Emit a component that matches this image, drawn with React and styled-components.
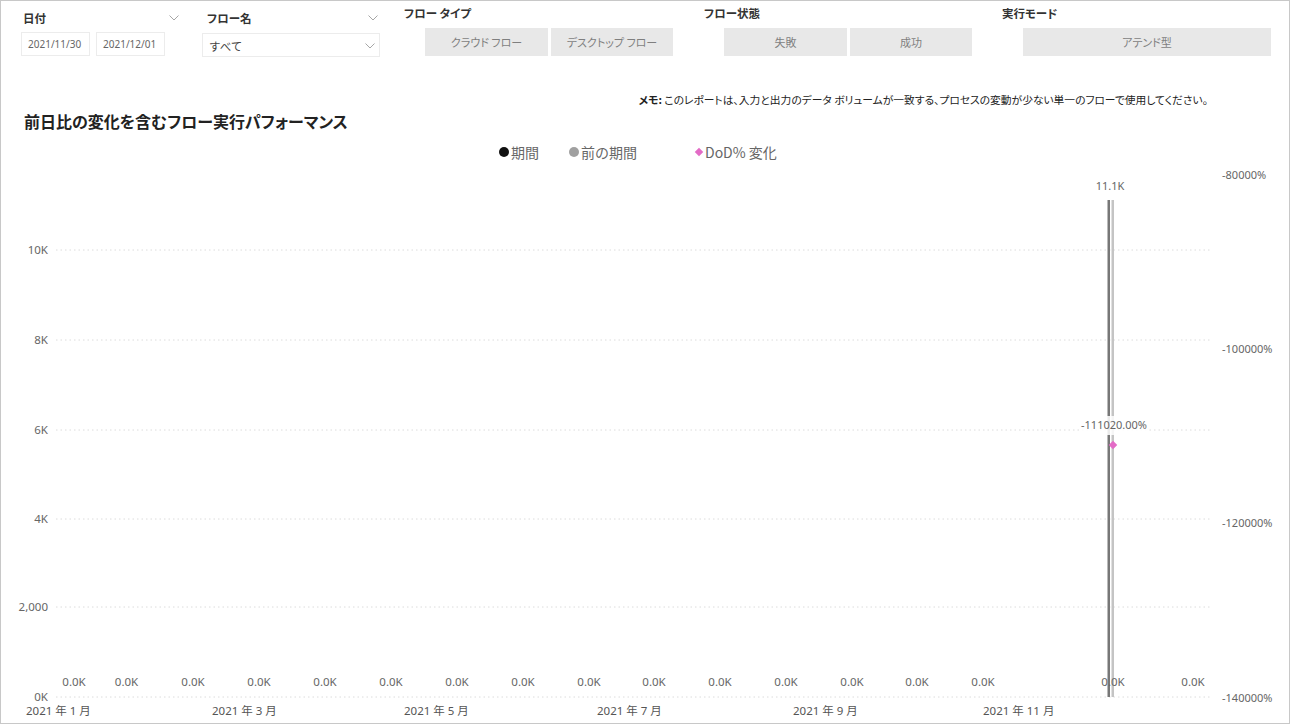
import React from "react";
import styled, { createGlobalStyle } from "styled-components";

const GlobalStyle = createGlobalStyle`
  body {
    margin: 0;
    background: #fff;
    font-family: "Noto Sans", "Noto Sans CJK JP", sans-serif;
  }
`;

const Frame = styled.div`
  width: 1290px;
  height: 724px;
  box-sizing: border-box;
  border: 1px solid #c8c8c8;
  display: flex;
  flex-direction: column;
  overflow: hidden;
  background: #fff;
`;

const FilterBar = styled.div`
  display: flex;
  align-items: flex-start;
  height: 70px;
  padding-left: 20px;
`;

const Group = styled.div`
  width: ${(p) => p.w}px;
  margin-left: ${(p) => p.ml || 0}px;
  padding-top: ${(p) => p.pt}px;
  flex-shrink: 0;
`;

const Header = styled.div`
  display: flex;
  justify-content: space-between;
  align-items: center;
  height: 14px;
  padding-right: 2px;
`;

const Label = styled.span`
  font-family: "Noto Sans CJK JP", sans-serif;
  font-feature-settings: "palt";
  font-size: 11.5px;
  font-weight: 700;
  color: #333;
  line-height: 14px;
  padding-left: ${(p) => p.pl || 0}px;
`;

const Chevron = () => (
  <svg width="10" height="6" viewBox="0 0 10 6">
    <polyline points="0.5,0.5 5,5 9.5,0.5" fill="none" stroke="#a6a6a6" strokeWidth="1" />
  </svg>
);

const Inputs = styled.div`
  display: flex;
  gap: 6px;
  margin-top: 7px;
`;

const DateBox = styled.div`
  width: 69px;
  height: 24px;
  box-sizing: border-box;
  border: 1px solid #ececec;
  font-size: 10px;
  color: #666;
  display: flex;
  align-items: center;
  padding-left: 6px;
`;

const Dropdown = styled.div`
  margin-top: 8px;
  width: 178px;
  height: 24px;
  box-sizing: border-box;
  border: 1px solid #ececec;
  display: flex;
  align-items: center;
  justify-content: space-between;
  padding: 1px 4px 0 6px;
  font-family: "Noto Sans CJK JP", sans-serif;
  font-size: 11.5px;
  color: #444;
`;

const Buttons = styled.div`
  display: flex;
  gap: 3px;
  margin-top: 8px;
  margin-left: ${(p) => p.ml}px;
`;

const SlicerButton = styled.div`
  width: ${(p) => p.w}px;
  height: 28px;
  background: #e8e8e8;
  display: flex;
  align-items: center;
  justify-content: center;
  font-family: "Noto Sans CJK JP", sans-serif;
  font-feature-settings: "palt";
  font-size: 11px;
  color: #7f7f7f;
`;

const Note = styled.div`
  margin-top: 22px;
  padding-right: 81px;
  text-align: right;
  font-family: "Noto Sans CJK JP", sans-serif;
  font-feature-settings: "palt";
  font-size: 10.75px;
  line-height: 14px;
  color: #222;
  b {
    font-weight: 700;
  }
`;

const Title = styled.div`
  margin-top: 3px;
  padding-left: 23px;
  font-family: "Noto Sans CJK JP", sans-serif;
  font-feature-settings: "palt";
  font-size: 16px;
  font-weight: 700;
  line-height: 22px;
  color: #222;
`;

const Legend = styled.div`
  display: flex;
  align-items: center;
  margin-top: 11px;
  height: 18px;
  padding-left: 498px;
  font-family: "Noto Sans CJK JP", sans-serif;
  font-size: 14px;
  color: #666;
`;

const LegendItem = styled.div`
  display: flex;
  align-items: center;
  margin-left: ${(p) => p.ml}px;
  gap: 2px;
`;

const Dot = styled.span`
  width: 10px;
  height: 10px;
  border-radius: 50%;
  background: ${(p) => p.color};
`;

const Diamond = styled.span`
  width: 6px;
  height: 6px;
  margin: 0 1px;
  background: #e36bc6;
  transform: rotate(45deg);
`;

const Chart = styled.svg`
  display: block;
  flex-shrink: 0;
`;

const ChartText = styled.text`
  font-family: "Noto Sans", "Noto Sans CJK JP", sans-serif;
  font-size: ${(p) => p.size || 12}px;
  fill: ${(p) => p.color || "#666"};
`;

const leftTicks = [
  { y: 250, t: "10K" },
  { y: 340, t: "8K" },
  { y: 430, t: "6K" },
  { y: 519, t: "4K" },
  { y: 607, t: "2,000" },
  { y: 697, t: "0K" },
];

const rightTicks = [
  { y: 175, t: "-80000%" },
  { y: 349, t: "-100000%" },
  { y: 523, t: "-120000%" },
  { y: 698, t: "-140000%" },
];

const zeroLabels = [74, 126.5, 193, 259, 325, 391, 457, 523, 589, 654, 720, 786, 852, 917, 983, 1113, 1193];

const months = [
  { x: 26, t: "2021 年 1 月" },
  { x: 212, t: "2021 年 3 月" },
  { x: 404, t: "2021 年 5 月" },
  { x: 597, t: "2021 年 7 月" },
  { x: 793, t: "2021 年 9 月" },
  { x: 983, t: "2021 年 11 月" },
];

function PerformanceChart() {
  return (
    <Chart width="1288" height="562" viewBox="1 161 1288 562">
      {leftTicks.map((g) => (
        <line key={g.y} x1="56" x2="1210" y1={g.y} y2={g.y} stroke="#dcdcdc" strokeWidth="1" strokeDasharray="1.5 3" />
      ))}
      {leftTicks.map((g) => (
        <ChartText key={g.t} x="48" y={g.y + 3.5} textAnchor="end" size={11.5}>
          {g.t}
        </ChartText>
      ))}
      {rightTicks.map((g) => (
        <ChartText key={g.t} x="1222" y={g.y + 4} size={11}>
          {g.t}
        </ChartText>
      ))}

      <rect x="1107.5" y="200" width="2.5" height="497" fill="#777" />
      <rect x="1111.5" y="200" width="2.5" height="497" fill="#c4c4c4" />
      <ChartText x="1110" y="190" textAnchor="middle" size={11}>
        11.1K
      </ChartText>

      <rect x="1079" y="416" width="70" height="19" fill="#fff" opacity="0.85" />
      <ChartText x="1114" y="429" textAnchor="middle" size={11}>
        -111020.00%
      </ChartText>
      <rect x="1110" y="442" width="6" height="6" fill="#e36bc6" transform="rotate(45 1113 445)" />

      {zeroLabels.map((x) => (
        <ChartText key={x} x={x} y="686" textAnchor="middle" size={11.5}>
          0.0K
        </ChartText>
      ))}
      {months.map((m) => (
        <ChartText key={m.t} x={m.x} y="715" size={11.5} color="#555">
          {m.t}
        </ChartText>
      ))}
    </Chart>
  );
}

export default function App() {
  return (
    <>
      <GlobalStyle />
      <Frame>
        <FilterBar>
          <Group w={160} pt={10}>
            <Header>
              <Label pl={2}>日付</Label>
              <Chevron />
            </Header>
            <Inputs>
              <DateBox>2021/11/30</DateBox>
              <DateBox>2021/12/01</DateBox>
            </Inputs>
          </Group>
          <Group w={178} ml={21} pt={10}>
            <Header>
              <Label pl={5}>フロー名</Label>
              <Chevron />
            </Header>
            <Dropdown>
              <span>すべて</span>
              <Chevron />
            </Dropdown>
          </Group>
          <Group w={269} ml={24} pt={5}>
            <Header>
              <Label>フロー タイプ</Label>
            </Header>
            <Buttons ml={21}>
              <SlicerButton w={124}>クラウド フロー</SlicerButton>
              <SlicerButton w={123}>デスクトップ フロー</SlicerButton>
            </Buttons>
          </Group>
          <Group w={268} ml={31} pt={5}>
            <Header>
              <Label>フロー状態</Label>
            </Header>
            <Buttons ml={20}>
              <SlicerButton w={124}>失敗</SlicerButton>
              <SlicerButton w={123}>成功</SlicerButton>
            </Buttons>
          </Group>
          <Group w={269} ml={30} pt={5}>
            <Header>
              <Label>実行モード</Label>
            </Header>
            <Buttons ml={21}>
              <SlicerButton w={248}>アテンド型</SlicerButton>
            </Buttons>
          </Group>
        </FilterBar>

        <Note>
          <b>メモ:</b> このレポートは、入力と出力のデータ ボリュームが一致する、プロセスの変動が少ない単一のフローで使用してください。
        </Note>
        <Title>前日比の変化を含むフロー実行パフォーマンス</Title>

        <Legend>
          <LegendItem ml={0}>
            <Dot color="#111" />
            <span>期間</span>
          </LegendItem>
          <LegendItem ml={30}>
            <Dot color="#a0a0a0" />
            <span>前の期間</span>
          </LegendItem>
          <LegendItem ml={58}>
            <Diamond />
            <span>DoD% 変化</span>
          </LegendItem>
        </Legend>

        <PerformanceChart />
      </Frame>
    </>
  );
}
